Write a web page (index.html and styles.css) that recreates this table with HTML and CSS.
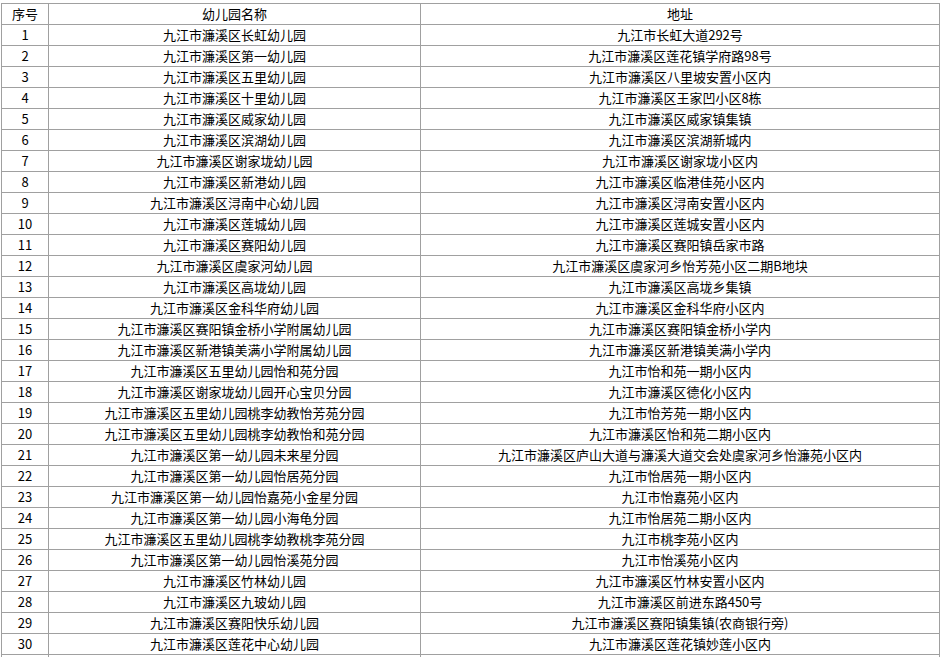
FILE: index.html
```html
<!DOCTYPE html>
<html lang="zh-CN">
<head>
<meta charset="utf-8">
<title>幼儿园名单</title>
<link rel="stylesheet" href="styles.css">
</head>
<body>
<table class="list">
<colgroup><col class="c-no"><col class="c-name"><col class="c-addr"></colgroup>
<tr><td>序号</td><td>幼儿园名称</td><td>地址</td></tr>
<tr><td>1</td><td>九江市濂溪区长虹幼儿园</td><td>九江市长虹大道292号</td></tr>
<tr><td>2</td><td>九江市濂溪区第一幼儿园</td><td>九江市濂溪区莲花镇学府路98号</td></tr>
<tr><td>3</td><td>九江市濂溪区五里幼儿园</td><td>九江市濂溪区八里坡安置小区内</td></tr>
<tr><td>4</td><td>九江市濂溪区十里幼儿园</td><td>九江市濂溪区王家凹小区8栋</td></tr>
<tr><td>5</td><td>九江市濂溪区威家幼儿园</td><td>九江市濂溪区威家镇集镇</td></tr>
<tr><td>6</td><td>九江市濂溪区滨湖幼儿园</td><td>九江市濂溪区滨湖新城内</td></tr>
<tr><td>7</td><td>九江市濂溪区谢家垅幼儿园</td><td>九江市濂溪区谢家垅小区内</td></tr>
<tr><td>8</td><td>九江市濂溪区新港幼儿园</td><td>九江市濂溪区临港佳苑小区内</td></tr>
<tr><td>9</td><td>九江市濂溪区浔南中心幼儿园</td><td>九江市濂溪区浔南安置小区内</td></tr>
<tr><td>10</td><td>九江市濂溪区莲城幼儿园</td><td>九江市濂溪区莲城安置小区内</td></tr>
<tr><td>11</td><td>九江市濂溪区赛阳幼儿园</td><td>九江市濂溪区赛阳镇岳家市路</td></tr>
<tr><td>12</td><td>九江市濂溪区虞家河幼儿园</td><td>九江市濂溪区虞家河乡怡芳苑小区二期B地块</td></tr>
<tr><td>13</td><td>九江市濂溪区高垅幼儿园</td><td>九江市濂溪区高垅乡集镇</td></tr>
<tr><td>14</td><td>九江市濂溪区金科华府幼儿园</td><td>九江市濂溪区金科华府小区内</td></tr>
<tr><td>15</td><td>九江市濂溪区赛阳镇金桥小学附属幼儿园</td><td>九江市濂溪区赛阳镇金桥小学内</td></tr>
<tr><td>16</td><td>九江市濂溪区新港镇美满小学附属幼儿园</td><td>九江市濂溪区新港镇美满小学内</td></tr>
<tr><td>17</td><td>九江市濂溪区五里幼儿园怡和苑分园</td><td>九江市怡和苑一期小区内</td></tr>
<tr><td>18</td><td>九江市濂溪区谢家垅幼儿园开心宝贝分园</td><td>九江市濂溪区德化小区内</td></tr>
<tr><td>19</td><td>九江市濂溪区五里幼儿园桃李幼教怡芳苑分园</td><td>九江市怡芳苑一期小区内</td></tr>
<tr><td>20</td><td>九江市濂溪区五里幼儿园桃李幼教怡和苑分园</td><td>九江市濂溪区怡和苑二期小区内</td></tr>
<tr><td>21</td><td>九江市濂溪区第一幼儿园未来星分园</td><td>九江市濂溪区庐山大道与濂溪大道交会处虞家河乡怡濂苑小区内</td></tr>
<tr><td>22</td><td>九江市濂溪区第一幼儿园怡居苑分园</td><td>九江市怡居苑一期小区内</td></tr>
<tr><td>23</td><td>九江市濂溪区第一幼儿园怡嘉苑小金星分园</td><td>九江市怡嘉苑小区内</td></tr>
<tr><td>24</td><td>九江市濂溪区第一幼儿园小海龟分园</td><td>九江市怡居苑二期小区内</td></tr>
<tr><td>25</td><td>九江市濂溪区五里幼儿园桃李幼教桃李苑分园</td><td>九江市桃李苑小区内</td></tr>
<tr><td>26</td><td>九江市濂溪区第一幼儿园怡溪苑分园</td><td>九江市怡溪苑小区内</td></tr>
<tr><td>27</td><td>九江市濂溪区竹林幼儿园</td><td>九江市濂溪区竹林安置小区内</td></tr>
<tr><td>28</td><td>九江市濂溪区九玻幼儿园</td><td>九江市濂溪区前进东路450号</td></tr>
<tr><td>29</td><td>九江市濂溪区赛阳快乐幼儿园</td><td>九江市濂溪区赛阳镇集镇(农商银行旁)</td></tr>
<tr><td>30</td><td>九江市濂溪区莲花中心幼儿园</td><td>九江市濂溪区莲花镇妙莲小区内</td></tr>
<tr><td>&nbsp;</td><td>&nbsp;</td><td>&nbsp;</td></tr>
</table>
</body>
</html>
```
FILE: styles.css
```css
html, body {
  margin: 0;
  padding: 0;
  background: #ffffff;
}
body {
  padding: 3px 0 0 1px;
  font-family: "Noto Sans CJK SC", "DejaVu Sans", sans-serif;
  font-size: 13px;
  color: #000000;
}
.list {
  border-collapse: collapse;
  table-layout: fixed;
  width: 938px;
}
.c-no { width: 47px; }
.c-name { width: 372px; }
.c-addr { width: 519px; }
.list td {
  border: 1px solid #a0a0a0;
  height: 20px;
  padding: 0;
  text-align: center;
  vertical-align: middle;
  line-height: 20px;
  white-space: nowrap;
  overflow: hidden;
}
```
